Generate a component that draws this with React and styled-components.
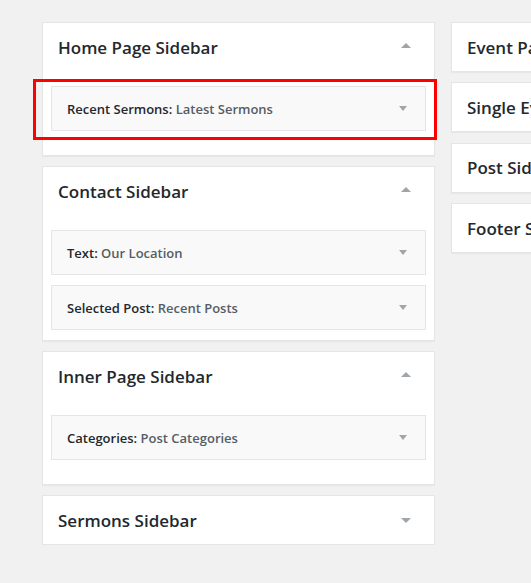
import React from "react";
import styled, { createGlobalStyle } from "styled-components";

const Global = createGlobalStyle`
  html, body { margin: 0; padding: 0; overflow: hidden; }
  body {
    background: #f1f1f1;
    font-family: "Open Sans", "Noto Sans", sans-serif;
    color: #23282d;
  }
  * { box-sizing: border-box; }
`;

const Page = styled.div`
  display: flex;
  align-items: flex-start;
  gap: 16px;
  padding: 22px 0 0 42px;
  width: 900px;
`;

const Column = styled.div`
  display: flex;
  flex-direction: column;
  gap: ${(p) => p.$gap}px;
  width: 393px;
  flex-shrink: 0;
`;

const Sidebar = styled.section`
  background: #fff;
  border: 1px solid #e5e5e5;
  box-shadow: 0 1px 1px rgba(0, 0, 0, 0.04);
`;

const Header = styled.div`
  display: flex;
  align-items: center;
  justify-content: space-between;
  height: 48px;
  padding: 0 23px 0 15px;
`;

const Title = styled.h2`
  margin: 0;
  font-size: 17px;
  font-weight: 600;
  color: #23282d;
  white-space: nowrap;
`;

const Arrow = styled.span`
  width: 0;
  height: 0;
  border-left: ${(p) => p.$w / 2}px solid transparent;
  border-right: ${(p) => p.$w / 2}px solid transparent;
  ${(p) =>
    p.$up
      ? `border-bottom: ${p.$h}px solid #a0a5aa;`
      : `border-top: ${p.$h}px solid #a0a5aa;`}
  margin-top: ${(p) => (p.$up ? -3 : 0)}px;
`;

const WidgetList = styled.div`
  display: flex;
  flex-direction: column;
  gap: 10px;
  padding: 15px 8px 10px;
  min-height: 84px;
`;

const Widget = styled.div`
  position: relative;
  display: flex;
  align-items: center;
  justify-content: space-between;
  height: 45px;
  padding: 0 18px 0 15px;
  background: #f9f9f9;
  border: 1px solid #e5e5e5;
`;

const WidgetTitle = styled.h3`
  margin: 0;
  font-size: 13px;
  font-weight: 600;
  color: #23282d;
`;

const InTitle = styled.span`
  color: #555d66;
`;

const Highlight = styled.div`
  position: absolute;
  left: -19px;
  right: -12px;
  top: -8px;
  bottom: -10px;
  border: 3px solid #ff0000;
  pointer-events: none;
`;

const left = [
  {
    name: "Home Page Sidebar",
    open: true,
    widgets: [{ type: "Recent Sermons", title: "Latest Sermons", hl: true }],
  },
  {
    name: "Contact Sidebar",
    open: true,
    widgets: [
      { type: "Text", title: "Our Location" },
      { type: "Selected Post", title: "Recent Posts" },
    ],
  },
  {
    name: "Inner Page Sidebar",
    open: true,
    widgets: [{ type: "Categories", title: "Post Categories" }],
  },
  { name: "Sermons Sidebar", open: false, widgets: [] },
];

const right = [
  { name: "Event Page Sidebar", open: false, widgets: [] },
  { name: "Single Event Sidebar", open: false, widgets: [] },
  { name: "Post Sidebar", open: false, widgets: [] },
  { name: "Footer Sidebar", open: false, widgets: [] },
];

function SidebarBox({ s }) {
  return (
    <Sidebar>
      <Header>
        <Title>{s.name}</Title>
        <Arrow $up={s.open} $w={10} $h={5} />
      </Header>
      {s.open && (
        <WidgetList>
          {s.widgets.map((w) => (
            <Widget key={w.type}>
              <WidgetTitle>
                {w.type}: <InTitle>{w.title}</InTitle>
              </WidgetTitle>
              <Arrow $w={8} $h={5} />
              {w.hl && <Highlight />}
            </Widget>
          ))}
        </WidgetList>
      )}
    </Sidebar>
  );
}

export default function App() {
  return (
    <>
      <Global />
      <Page>
        <Column $gap={10}>
          {left.map((s) => (
            <SidebarBox key={s.name} s={s} />
          ))}
        </Column>
        <Column $gap={10.4}>
          {right.map((s) => (
            <SidebarBox key={s.name} s={s} />
          ))}
        </Column>
      </Page>
    </>
  );
}
